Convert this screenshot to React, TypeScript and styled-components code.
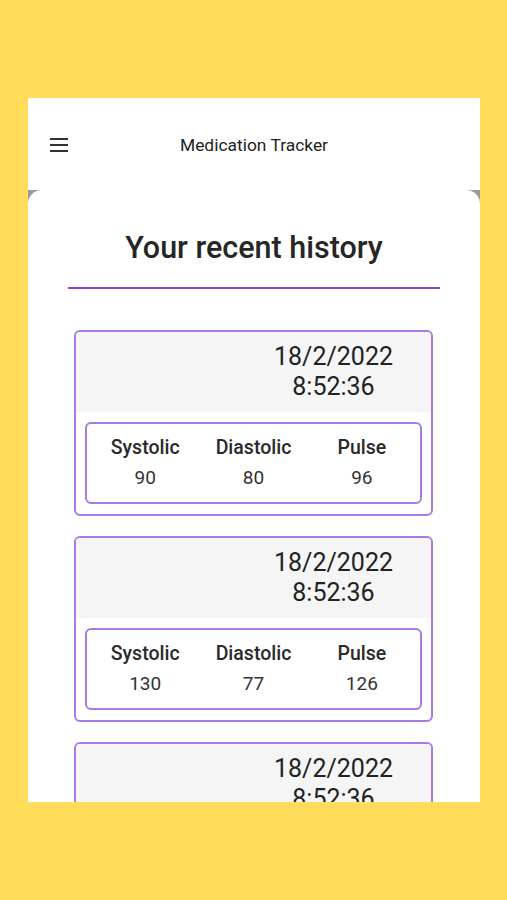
import React from "react";
import styled, { createGlobalStyle } from "styled-components";

const Global = createGlobalStyle`
  html, body { margin: 0; padding: 0; background: #ffdc5a; }
  body { font-family: Roboto, "Noto Sans", Arial, sans-serif; }
`;

const Page = styled.div`
  width: 507px;
  height: 900px;
  background: #ffdc5a;
  padding: 98px 27px 0 28px;
  box-sizing: border-box;
`;

const Screen = styled.div`
  width: 452px;
  height: 704px;
  overflow: hidden;
  background: #9a9a9a;
  display: flex;
  flex-direction: column;
`;

const Header = styled.header`
  height: 92px;
  flex: none;
  background: #ffffff;
  display: flex;
  align-items: center;
  padding-left: 22px;
`;

const MenuButton = styled.div`
  width: 18px;
  height: 14px;
  display: flex;
  flex-direction: column;
  justify-content: space-between;
  margin-top: 2px;
  span {
    display: block;
    height: 2px;
    background: #333;
  }
`;

const HeaderTitle = styled.div`
  flex: 1;
  text-align: center;
  font-size: 17.4px;
  color: #222;
  margin-left: -40px;
  margin-top: 2px;
`;

const Content = styled.main`
  flex: 1;
  background: #ffffff;
  border-radius: 14px 14px 0 0;
  display: flex;
  flex-direction: column;
  padding-top: 40px;
`;

const Title = styled.h1`
  margin: 0;
  font-size: 30.5px;
  font-weight: 500;
  line-height: 36px;
  text-align: center;
  color: #262626;
`;

const Divider = styled.div`
  height: 2px;
  background: #8b46d6;
  margin: 21px 40px 0 40px;
`;

const List = styled.div`
  display: flex;
  flex-direction: column;
  gap: 20px;
  margin: 41px 47px 0 46px;
`;

const Card = styled.div`
  border: 2px solid #a97ae4;
  border-radius: 6px;
  overflow: hidden;
  background: #fff;
  padding-bottom: 10px;
`;

const DateArea = styled.div`
  background: #f5f5f5;
  padding: 10px 0 10px 160px;
  text-align: center;
  font-size: 25px;
  line-height: 30px;
  color: #222;
`;

const Readings = styled.div`
  margin: 10px 9px 0 9px;
  border: 2px solid #a97ae4;
  border-radius: 6px;
  display: grid;
  grid-template-columns: repeat(3, 1fr);
  padding: 9px 4px 9px 4px;
`;

const Reading = styled.div`
  display: flex;
  flex-direction: column;
  align-items: center;
  line-height: 30px;
  font-size: 19.5px;
  color: #333;
`;

const Label = styled.div`
  font-weight: 500;
  color: #2a2a2a;
`;

const Value = styled.div`
  font-weight: 400;
  font-size: 19px;
`;

const entries = [
  { date: "18/2/2022", time: "8:52:36", s: 90, d: 80, p: 96 },
  { date: "18/2/2022", time: "8:52:36", s: 130, d: 77, p: 126 },
  { date: "18/2/2022", time: "8:52:36", s: 120, d: 80, p: 90 },
];

export default function App() {
  return (
    <>
      <Global />
      <Page>
        <Screen>
          <Header>
            <MenuButton>
              <span />
              <span />
              <span />
            </MenuButton>
            <HeaderTitle>Medication Tracker</HeaderTitle>
          </Header>
          <Content>
            <Title>Your recent history</Title>
            <Divider />
            <List>
              {entries.map((e, i) => (
                <Card key={i}>
                  <DateArea>
                    <div>{e.date}</div>
                    <div>{e.time}</div>
                  </DateArea>
                  <Readings>
                    <Reading>
                      <Label>Systolic</Label>
                      <Value>{e.s}</Value>
                    </Reading>
                    <Reading>
                      <Label>Diastolic</Label>
                      <Value>{e.d}</Value>
                    </Reading>
                    <Reading>
                      <Label>Pulse</Label>
                      <Value>{e.p}</Value>
                    </Reading>
                  </Readings>
                </Card>
              ))}
            </List>
          </Content>
        </Screen>
      </Page>
    </>
  );
}
